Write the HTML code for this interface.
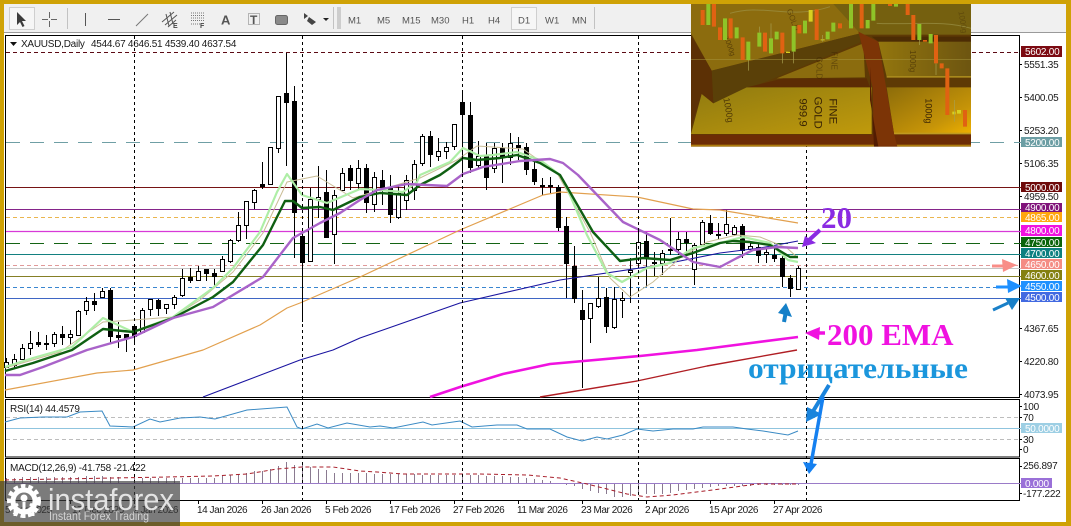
<!DOCTYPE html>
<html><head><meta charset="utf-8"><title>XAUUSD Daily</title>
<style>html,body{margin:0;padding:0;background:#fff}svg{display:block;font-family:"Liberation Sans",sans-serif;font-size:10px;letter-spacing:-.25px}text{fill:#1a1a1a}.d text{letter-spacing:-.45px}.z{letter-spacing:0}</style></head>
<body>
<svg xmlns="http://www.w3.org/2000/svg" width="1071" height="526" viewBox="0 0 1071 526">
<defs>
<linearGradient id="g1" x1="0" y1="0" x2="1" y2="1"><stop offset="0" stop-color="#8f7a10"/><stop offset="1" stop-color="#c09a0c"/></linearGradient>
<linearGradient id="g2" x1="0" y1="0" x2="1" y2="1"><stop offset="0" stop-color="#8c6c0a"/><stop offset=".7" stop-color="#c69408"/><stop offset="1" stop-color="#eeb000"/></linearGradient>
<linearGradient id="g3" x1="0" y1="0" x2="1" y2="0"><stop offset="0" stop-color="#93760e"/><stop offset="1" stop-color="#6d5510"/></linearGradient>
<clipPath id="c"><rect x="3" y="12" width="840" height="428"/></clipPath>
</defs>
<rect width="1071" height="526" fill="#cfa205"/>
<rect x="4" y="4" width="1062" height="518" fill="#fff"/>
<!-- toolbar -->
<rect x="4" y="4" width="1062" height="28" fill="#f0f0f0"/>
<rect x="4" y="32" width="1062" height="1" fill="#9a9a9a"/>
<rect x="9.5" y="7.5" width="25" height="22" fill="#f6f6f6" stroke="#cfcfcf"/>
<path d="M17 12l0 13 3-3 2.5 5 2-1-2.5-5 4 0z" fill="#3c3c3c"/>
<path d="M42 19.5h6M51 19.5h6M49.5 12v6M49.5 21v6" stroke="#666" fill="none"/>
<path d="M67.5 8v21" stroke="#c2c2c2"/>
<path d="M85.5 13v13" stroke="#555"/>
<path d="M108 19.5h12" stroke="#555"/>
<path d="M136 26l12-12" stroke="#777"/>
<path d="M162 22l12-10M165 25l12-10M168 27l8-7M166 14l3 12M170 12l3 12" stroke="#555" fill="none"/>
<text class="z" x="173" y="28" style="font-size:7px;font-weight:bold;fill:#444">E</text>
<path d="M191 13h13M191 15.5h13M191 18h13M191 20.5h13M191 24h9" stroke="#777" stroke-dasharray="1 1"/>
<text class="z" x="200" y="28" style="font-size:7px;font-weight:bold;fill:#444">F</text>
<text class="z" x="221" y="24.5" style="font-size:13px;font-weight:bold;fill:#555">A</text>
<rect x="248.5" y="13.5" width="11" height="11" fill="none" stroke="#777" stroke-dasharray="1 1"/>
<text class="z" x="250" y="24" style="font-size:12px;font-weight:bold;fill:#555">T</text>
<rect x="275.5" y="15.5" width="12" height="9" rx="2" fill="#8a8a8a" stroke="#666"/>
<path d="M304 13l4 3-4 3zM309 17l7 5-4 3-5-4z" fill="#444"/>
<path d="M323 18h6l-3 3z" fill="#222"/>
<path d="M333.5 7v22" stroke="#c2c2c2"/>
<path d="M337 8h4M337 10h4M337 12h4M337 14h4M337 16h4M337 18h4M337 20h4M337 22h4M337 24h4M337 26h4M337 28h4" stroke="#aaa"/>
<g class="z">
<text x="348" y="23.5" style="font-size:9.5px;fill:#555">M1</text>
<text x="377" y="23.5" style="font-size:9.5px;fill:#555">M5</text>
<text x="402" y="23.5" style="font-size:9.5px;fill:#555">M15</text>
<text x="431" y="23.5" style="font-size:9.5px;fill:#555">M30</text>
<text x="462" y="23.5" style="font-size:9.5px;fill:#555">H1</text>
<text x="488" y="23.5" style="font-size:9.5px;fill:#555">H4</text>
<rect x="511.5" y="7.5" width="25" height="22" fill="#f6f6f6" stroke="#cfcfcf"/>
<text x="518" y="23.5" style="font-size:9.5px;fill:#555">D1</text>
<text x="545" y="23.5" style="font-size:9.5px;fill:#555">W1</text>
<text x="572" y="23.5" style="font-size:9.5px;fill:#555">MN</text>
</g>
<path d="M594.5 7v22" stroke="#c2c2c2"/>

<!-- panes -->
<path d="M5 35.5H1019.5V397.5H5.5V35M5.5 399.5H1019.5V457H5.5zM5.5 458.5H1019.5V500.5H5.5z" fill="none" stroke="#000"/>

<!-- horizontal levels -->
<g fill="none">
<path d="M6 52.5H1021" stroke="#5c0a14" stroke-dasharray="4 3"/>
<path d="M6 142.5H1021" stroke="#6f9fa5" stroke-dasharray="14 10"/>
<path d="M6 187.5H1021" stroke="#761414"/>
<path d="M6 209.5H1021" stroke="#85248a"/>
<path d="M6 217.5H1021" stroke="#eab54e" stroke-dasharray="4 3"/>
<path d="M6 231.5H1021" stroke="#d83ad8" stroke-width="1.3"/>
<path d="M6 243.5H1021" stroke="#146414" stroke-dasharray="14 10"/>
<path d="M6 254.5H1021" stroke="#138080"/>
<path d="M6 265.5H1021" stroke="#e09a9a" stroke-dasharray="4 3"/>
<path d="M6 268.5H1021" stroke="#c4c4c4"/>
<path d="M6 276.5H1021" stroke="#857f25"/>
<path d="M6 287.5H1021" stroke="#3a86d0" stroke-dasharray="4 3"/>
<path d="M6 298.5H1021" stroke="#3f66c4"/>
</g>

<!-- candle wicks -->
<path stroke="#000" fill="none" d="M6.5 358V368M14.5 354V368M22.5 344V360M30.5 331V355M38.5 332V347M46.5 335V350M54.5 332V347M62.5 326V345M70.5 330V345M78.5 310V336M86.5 297V315M94.5 293V311M102.5 288V298M110.5 288V343M118.5 322V348M126.5 334V352M134.5 324V345M142.5 308V333M150.5 299V316M158.5 299V316M166.5 304V314M174.5 295V309M182.5 269V297M190.5 268V283M198.5 266V280M206.5 269V281M214.5 269V287M222.5 256V272M230.5 239V263M238.5 212V242M246.5 201V239M254.5 189V209M262.5 162V189M270.5 147V184M278.5 96V153M286.5 53V166M294.5 86V258M302.5 233V322M310.5 188V261M318.5 166V218M326.5 170V238M334.5 190V264M342.5 168V190M350.5 165V190M358.5 160V190M366.5 164V213M374.5 172V212M382.5 170V205M390.5 175V223M398.5 185V219M406.5 175V210M414.5 160V200M422.5 134V166M430.5 131V167M438.5 138V161M446.5 142V159M454.5 124V150M462.5 93V175M470.5 102V173M478.5 141V169M486.5 143V190M494.5 143V173M502.5 143V183M510.5 133V165M518.5 137V160M526.5 143V175M534.5 158V185M542.5 178V195M550.5 177V194M558.5 185V231M566.5 217V298M574.5 246V303M582.5 290V388M590.5 303V343M598.5 277V308M606.5 288V333M614.5 287V329M622.5 292V318M630.5 258V303M638.5 230V268M646.5 232V287M654.5 252V276M662.5 250V275M670.5 218V255M678.5 232V255M686.5 232V255M694.5 243V285M702.5 220V245M710.5 215V235M718.5 223V239M726.5 210V236M734.5 225V236M742.5 224V258M750.5 243V251M758.5 243V263M766.5 247V263M774.5 248V262M782.5 256V287M790.5 275V297M798.5 266V290"/>
<!-- white bodies -->
<path fill="#fff" stroke="#000" d="M4.5 362.5h4v5h-4zM12.5 359.5h4v6h-4zM20.5 348.5h4v11h-4zM28.5 343.5h4v5h-4zM44.5 343.5h4v1h-4zM52.5 334.5h4v9h-4zM68.5 334.5h4v3h-4zM76.5 311.5h4v24h-4zM84.5 301.5h4v9h-4zM100.5 291.5h4v6h-4zM140.5 310.5h4v22h-4zM148.5 299.5h4v10h-4zM164.5 304.5h4v4h-4zM172.5 297.5h4v7h-4zM180.5 278.5h4v17h-4zM196.5 271.5h4v9h-4zM220.5 259.5h4v12h-4zM228.5 240.5h4v21h-4zM236.5 225.5h4v15h-4zM244.5 201.5h4v24h-4zM252.5 190.5h4v12h-4zM268.5 147.5h4v37h-4zM276.5 96.5h4v52h-4zM308.5 199.5h4v62h-4zM316.5 197.5h4v2h-4zM332.5 195.5h4v39h-4zM340.5 173.5h4v17h-4zM356.5 168.5h4v15h-4zM372.5 177.5h4v27h-4zM396.5 193.5h4v24h-4zM404.5 180.5h4v20h-4zM412.5 164.5h4v26h-4zM420.5 136.5h4v27h-4zM436.5 151.5h4v5h-4zM444.5 147.5h4v4h-4zM452.5 124.5h4v22h-4zM476.5 156.5h4v9h-4zM492.5 148.5h4v20h-4zM508.5 143.5h4v14h-4zM588.5 303.5h4v15h-4zM596.5 298.5h4v8h-4zM612.5 299.5h4v28h-4zM620.5 298.5h4v2h-4zM628.5 270.5h4v2h-4zM636.5 242.5h4v21h-4zM660.5 253.5h4v10h-4zM676.5 239.5h4v10h-4zM692.5 245.5h4v24h-4zM700.5 222.5h4v22h-4zM724.5 224.5h4v9h-4zM732.5 227.5h4v7h-4zM748.5 246.5h4v3h-4zM764.5 252.5h4v2h-4zM796.5 268.5h4v21h-4z"/>
<!-- black bodies -->
<path fill="#000" d="M36 342h5v3h-5zM60 334h5v4h-5zM92 301h5v4h-5zM108 290h5v47h-5zM116 335h5v3h-5zM124 334h5v5h-5zM132 326h5v11h-5zM156 300h5v9h-5zM188 277h5v4h-5zM204 269h5v5h-5zM212 273h5v4h-5zM260 184h5v3h-5zM284 93h5v10h-5zM292 101h5v112h-5zM300 236h5v27h-5zM324 192h5v46h-5zM348 168h5v13h-5zM364 168h5v35h-5zM380 180h5v8h-5zM388 188h5v27h-5zM428 136h5v19h-5zM460 102h5v13h-5zM468 115h5v53h-5zM484 156h5v22h-5zM500 148h5v10h-5zM516 145h5v3h-5zM524 147h5v23h-5zM532 169h5v13h-5zM540 185h5v2h-5zM548 185h5v2h-5zM556 187h5v41h-5zM564 226h5v38h-5zM572 266h5v33h-5zM580 310h5v10h-5zM604 297h5v30h-5zM644 241h5v17h-5zM652 262h5v2h-5zM668 249h5v2h-5zM684 239h5v4h-5zM708 223h5v11h-5zM716 234h5v2h-5zM740 226h5v25h-5zM756 247h5v9h-5zM772 255h5v4h-5zM780 258h5v19h-5zM788 278h5v11h-5z"/>

<!-- moving averages -->
<g fill="none" stroke-linejoin="round">
<polyline stroke="#1a14a0" stroke-width="1.1" points="203,397 300,360 333,350 360,338 460,303 560,280 660,265 720,253 760,248 798,241"/>
<polyline stroke="#e2a04e" stroke-width="1.2" points="5,390 97,373 133,370 203,350 260,325 287,308 300,303 360,277 460,230 543,195 560,192 637,197 693,209 720,210 798,223"/>
<polyline stroke="#c9bd95" stroke-width="1" points="5,368 60,352 103,322 133,320 173,317 200,300 233,272 263,233 287,182 297,180 317,176 353,198 420,178 457,160 477,146 493,147 523,149 557,173 590,232 610,278 630,297 653,282 680,258 707,242 737,235 760,237 787,248 798,258"/>
<polyline stroke="#aeeea6" stroke-width="2.2" points="5,367 33,358 72,347 103,318 133,332 173,317 213,288 233,268 260,232 277,192 287,174 302,195 327,203 360,189 380,190 403,192 417,182 420,175 450,162 463,148 480,156 493,155 517,152 540,160 560,175 567,188 587,235 607,273 622,282 647,268 670,263 693,248 720,243 743,237 770,243 788,260 798,262"/>
<polyline stroke="#0f5f12" stroke-width="2.4" points="5,371 33,363 72,350 103,329 133,332 173,318 213,297 233,282 263,245 285,201 293,201 302,208 320,207 333,210 360,197 380,193 407,195 420,185 440,175 450,168 463,158 477,160 500,158 517,155 540,163 560,175 567,187 593,232 620,261 643,258 670,260 693,253 720,243 733,241 750,242 770,245 790,257 798,257"/>
<polyline stroke="#a963c9" stroke-width="2.4" points="5,375 20,375 43,367 87,350 133,337 173,318 213,307 263,277 293,238 320,223 340,213 360,200 377,190 407,184 447,186 463,174 483,167 520,161 550,159 563,163 578,175 623,222 660,240 693,262 720,267 737,258 753,250 777,247 798,248"/>
<polyline stroke="#f012e0" stroke-width="2.6" points="430,397 460,387 503,374 550,364 640,356 697,350 720,347 798,337"/>
<polyline stroke="#b01e24" stroke-width="1.4" points="540,397 637,381 707,366 797,350"/>
</g>

<!-- RSI -->
<path d="M6 417.5H1019M6 439.5H1019" stroke="#bdbdbd" stroke-dasharray="4 3"/>
<path d="M6 428.5H1021" stroke="#8fc4de"/>
<polyline fill="none" stroke="#3a8ac4" points="5,422 20,418 43,417 67,417 80,412 102,411 110,426 133,427 150,419 160,422 180,418 200,417 215,419 247,410 287,407 297,427 302,429 317,424 328,428 347,423 370,427 380,426 393,428 423,422 432,425 460,421 472,427 497,425 517,425 527,429 550,429 567,437 582,441 597,437 607,439 623,435 637,429 653,431 673,429 693,429 703,427 720,427 733,427 747,429 763,431 788,435 798,431"/>
<text x="10" y="412">RSI(14) 44.4579</text>

<!-- MACD -->
<path d="M6 483.5H1021" stroke="#9a7bc8"/>
<path stroke="#8a7a90" fill="none" d="M6.5 483V478M14.5 483V478M22.5 483V477M30.5 483V477M38.5 483V477M46.5 483V477M54.5 483V477M62.5 483V477M70.5 483V477M78.5 483V477M86.5 483V476M94.5 483V476M102.5 483V476M110.5 483V477M118.5 483V477M134.5 483V478M142.5 483V478M150.5 483V478M158.5 483V478M166.5 483V478M174.5 483V478M182.5 483V478M190.5 483V478M198.5 483V478M206.5 483V478M214.5 483V478M222.5 483V476M230.5 483V475M238.5 483V474M246.5 483V473M254.5 483V471M262.5 483V471M270.5 483V469M278.5 483V466M286.5 483V462M294.5 483V465M302.5 483V465M310.5 483V467M318.5 483V469M326.5 483V470M334.5 483V473M342.5 483V473M350.5 483V473M358.5 483V473M366.5 483V473M374.5 483V474M382.5 483V474M390.5 483V474M398.5 483V474M406.5 483V474M414.5 483V474M422.5 483V475M430.5 483V475M438.5 483V475M446.5 483V475M454.5 483V475M462.5 483V474M470.5 483V475M478.5 483V475M486.5 483V476M494.5 483V476M502.5 483V476M510.5 483V477M518.5 483V477M526.5 483V478M534.5 483V479M542.5 483V480M550.5 483V481M566.5 484V485M574.5 484V486M582.5 484V489M590.5 484V491M598.5 484V493M606.5 484V494M614.5 484V497M622.5 484V497M630.5 484V496M638.5 484V495M646.5 484V494M654.5 484V494M662.5 484V494M670.5 484V493M678.5 484V491M686.5 484V490M694.5 484V489M702.5 484V488M710.5 484V487M718.5 484V486M726.5 484V486M734.5 484V486M742.5 484V486M750.5 484V486M758.5 484V485M766.5 484V485M774.5 484V485M782.5 484V485M790.5 484V485M798.5 484V485"/>
<polyline fill="none" stroke="#a81e2a" stroke-dasharray="4 3" points="5,480 167,477 213,476 247,474 277,469 302,467 333,467 360,471 377,472 403,474 480,474 527,475 560,478 587,484 627,494 647,497 673,495 720,489 757,484 798,484"/>
<text x="10" y="471">MACD(12,26,9) -41.758 -21.422</text>

<!-- vertical dashed -->
<path d="M134.5 36V500M302.5 36V500M462.5 36V500M638.5 36V500M806.5 36V500" stroke="#000" stroke-dasharray="3 3" fill="none"/>

<!-- header -->
<path d="M10 42h7l-3.5 4z" fill="#111"/>
<text x="21" y="47">XAUUSD,Daily</text>
<text x="91" y="47">4544.67 4646.51 4539.40 4637.54</text>

<!-- x axis -->
<path d="M198.5 500v4M262.5 500v4M326.5 500v4M390.5 500v4M454.5 500v4M518.5 500v4M582.5 500v4M646.5 500v4M710.5 500v4M774.5 500v4M70.5 500v4M134.5 500v4" stroke="#000"/>
<g class="d">
<text x="5" y="513">5 Dec 2025</text><text x="72" y="513">17 Dec 2025</text><text x="133" y="513">2 Jan 2026</text>
<text x="197" y="513">14 Jan 2026</text><text x="261" y="513">26 Jan 2026</text><text x="325" y="513">5 Feb 2026</text>
<text x="389" y="513">17 Feb 2026</text><text x="453" y="513">27 Feb 2026</text><text x="517" y="513">11 Mar 2026</text>
<text x="581" y="513">23 Mar 2026</text><text x="645" y="513">2 Apr 2026</text><text x="709" y="513">15 Apr 2026</text><text x="773" y="513">27 Apr 2026</text>
</g>

<!-- price axis -->
<path d="M1019 64.5h3M1019 97.5h3M1019 130.5h3M1019 163.5h3M1019 196.5h3M1019 328.5h3M1019 361.5h3M1019 394.5h3M1019 406.5h3M1019 417.5h3M1019 439.5h3M1019 449.5h3M1019 466.5h3M1019 493.5h3" stroke="#000"/>
<text x="1024" y="68">5551.35</text><text x="1024" y="101">5400.05</text><text x="1024" y="134">5253.20</text><text x="1024" y="167">5106.35</text><text x="1024" y="200">4959.50</text><text x="1024" y="332">4367.65</text><text x="1024" y="365">4220.80</text><text x="1024" y="398">4073.95</text>
<text x="1023" y="410">100</text><text x="1023" y="421">70</text><text x="1023" y="443">30</text><text x="1023" y="453">0</text>
<text x="1023" y="469">256.897</text><text x="1023" y="497">-177.222</text>

<g>
<rect x="1021" y="46" width="41" height="11" fill="#7c0a12"/>
<rect x="1021" y="137" width="41" height="10" fill="#6c9ea4"/>
<rect x="1021" y="182" width="41" height="10" fill="#6e0a0a"/>
<rect x="1021" y="203" width="41" height="9" fill="#80127a"/>
<rect x="1021" y="212" width="41" height="10" fill="#ffa60e"/>
<rect x="1021" y="225" width="41" height="11" fill="#f012e0"/>
<rect x="1021" y="237" width="41" height="10" fill="#0a640a"/>
<rect x="1021" y="248" width="41" height="10" fill="#0d8080"/>
<rect x="1021" y="259" width="41" height="10" fill="#f48c84"/>
<rect x="1021" y="270" width="41" height="10" fill="#848010"/>
<rect x="1021" y="281" width="41" height="10" fill="#1e90ff"/>
<rect x="1021" y="292" width="41" height="10" fill="#4169e1"/>
<rect x="1021" y="423" width="41" height="10" fill="#9dcfe4"/>
<rect x="1021" y="478" width="31" height="10" fill="#9a70d8"/>
</g>
<g>
<text x="1025" y="55" style="fill:#fff">5602.00</text><text x="1025" y="146" style="fill:#fff">5200.00</text><text x="1025" y="191" style="fill:#fff">5000.00</text><text x="1025" y="211" style="fill:#fff">4900.00</text><text x="1025" y="221" style="fill:#fff">4865.00</text><text x="1025" y="234" style="fill:#fff">4800.00</text><text x="1025" y="246" style="fill:#fff">4750.00</text><text x="1025" y="257" style="fill:#fff">4700.00</text><text x="1025" y="268" style="fill:#fff">4650.00</text><text x="1025" y="279" style="fill:#fff">4600.00</text><text x="1025" y="290" style="fill:#fff">4550.00</text><text x="1025" y="301" style="fill:#fff">4500.00</text><text x="1025" y="432" style="fill:#fff">50.0000</text><text x="1025" y="487" style="fill:#fff">0.000</text>
</g>

<!-- gold image -->
<g class="z" transform="translate(690,0) scale(.33333)" clip-path="url(#c)">
<rect x="0" y="0" width="850" height="445" fill="#5e3a05"/>
<rect x="0" y="0" width="850" height="104" fill="#75600f"/>
<polygon points="3,100 65,212 510,100 430,12 3,12" fill="#8c6c0e"/>
<polygon points="65,212 70,310 510,128 510,100" fill="#5a4008"/>
<polygon points="0,100 65,212 70,310 35,282 0,390" fill="#5c3005"/>
<polygon points="260,235 520,130 525,232" fill="#8b6c0e"/>
<polygon points="170,262 280,235 530,235 540,262" fill="#5c2c04"/>
<polygon points="35,282 70,310 170,262 545,262 545,402 3,402" fill="url(#g1)"/>
<rect x="0" y="404" width="850" height="36" fill="#6c2c05"/>
<rect x="0" y="434" width="850" height="6" fill="#ad7c0c"/>
<polygon points="565,125 843,125 843,230 590,230" fill="url(#g3)"/>
<rect x="590" y="228" width="260" height="5" fill="#a8891c"/>
<polygon points="590,262 843,262 843,400 612,400" fill="url(#g2)"/>
<rect x="612" y="398" width="240" height="5" fill="#c09a20"/>
<polygon points="505,95 565,125 612,400 622,440 552,440 548,262" fill="#7c3406"/>
<polygon points="540,200 552,440 565,440 540,300" fill="#521c02"/>
<polygon points="545,110 845,110 845,125 565,125" fill="#4c2c04"/>
<path d="M3 178H843" stroke="#a89840" stroke-width="2" opacity=".8"/>
<path d="M120 40C220 10 300 60 420 20M560 70C680 75 760 60 843 85" stroke="#a09a50" stroke-width="3" fill="none" opacity=".6"/>
<g>
<text transform="translate(418,295) rotate(90)" style="font-size:34px;fill:#3a2404">FINE</text>
<text transform="translate(373,290) rotate(90)" style="font-size:34px;fill:#3a2404">GOLD</text>
<text transform="translate(328,295) rotate(90)" style="font-size:34px;fill:#3a2404">999,9</text>
<text transform="translate(707,295) rotate(90)" style="font-size:27px;fill:#3a2404">1000g</text>
<text transform="translate(100,295) rotate(80)" style="font-size:27px;fill:#3a2404;opacity:.8">1000g</text>
<text transform="translate(102,112) rotate(70)" style="font-size:22px;fill:#3a2404;opacity:.6">1000g</text>
<text transform="translate(290,30) rotate(70)" style="font-size:24px;fill:#3a2404;opacity:.5">GOLD</text>
<text transform="translate(660,150) rotate(90)" style="font-size:24px;fill:#3a2404;opacity:.6">1000g</text>
<text transform="translate(805,35) rotate(80)" style="font-size:24px;fill:#3a2404;opacity:.35">1000g</text>
<text transform="translate(425,155) rotate(90)" style="font-size:24px;fill:#3a2404;opacity:.5">FINE</text>
<text transform="translate(380,170) rotate(90)" style="font-size:24px;fill:#3a2404;opacity:.5">GOLD</text>
</g>
<path fill="#e06212" d="M32 30h12v45h-12zM66 12h12v68h-12zM84 82h12v38h-12zM116 55h12v60h-12zM152 112h12v68h-12zM219 98h12v57h-12zM271 98h12v62h-12zM322 75h12v25h-12zM374 28h12v92h-12zM444 70h12v15h-12zM509 12h12v73h-12zM594 12h12v6h-12zM647 12h12v33h-12zM664 45h12v75h-12zM699 120h12v5h-12zM732 105h12v85h-12zM749 190h12v15h-12zM766 205h12v140h-12zM819 330h12v50h-12z"/>
<path fill="#8fc428" d="M49 12h12v63h-12zM99 55h12v65h-12zM134 82h12v33h-12zM169 125h12v55h-12zM202 98h12v42h-12zM237 115h12v45h-12zM254 95h12v23h-12zM305 78h12v77h-12zM339 62h12v38h-12zM407 95h12v23h-12zM424 68h12v27h-12zM477 12h12v73h-12zM527 60h12v25h-12zM544 12h12v50h-12zM612 12h12v8h-12zM682 72h12v48h-12zM716 102h12v28h-12z"/>
<path fill="#d8d020" d="M356 30h12v35h-12zM787 335h10v8h-10zM801 330h12v11h-12zM288 155h12v4h-12zM392 118h12v3h-12z"/>
<path stroke="#a8a050" stroke-width="2" fill="none" d="M175 180v32M208 80v18M311 155v35M243 70v45M278 160v30M398 105v20M688 120v15M738 190v35M793 300v65"/>
</g>

<!-- annotations -->
<g class="z">
<text x="821" y="228" style="font-family:'Liberation Serif',serif;font-size:31px;font-weight:bold;fill:#8a2be2">20</text>
<text x="827" y="345" style="font-family:'Liberation Serif',serif;font-size:31px;font-weight:bold;fill:#f012e0">200 EMA</text>
<text x="748" y="378" textLength="220" lengthAdjust="spacingAndGlyphs" style="font-family:'Liberation Serif',serif;font-size:30px;font-weight:bold;fill:#1b96dc">отрицательные</text>
</g>
<path d="M820 230L808 241" stroke="#8a2be2" stroke-width="4"/>
<polygon points="802,247 805,236 816,243" fill="#8a2be2"/>
<path d="M825 333H815" stroke="#f012e0" stroke-width="3.5"/>
<polygon points="805,333 820,327 819,340" fill="#f012e0"/>
<path d="M829 385L812 413" stroke="#1a84dc" stroke-width="4"/>
<polygon points="806,422 807,407 822,414" fill="#1a84dc"/>
<path d="M823 397L811 464" stroke="#1580f0" stroke-width="3.5"/>
<polygon points="809,474 803,462 817,464" fill="#1580f0"/>
<path d="M784 322L786 311" stroke="#1580c8" stroke-width="4"/>
<polygon points="786,303 778,313 792,317" fill="#1580c8"/>
<path d="M992 266H1004" stroke="#f88e88" stroke-width="3"/>
<polygon points="1017,265 1002,259 1003,272" fill="#f88e88"/>
<path d="M996 287H1008" stroke="#1e90ff" stroke-width="3"/>
<polygon points="1022,286 1007,279 1008,293" fill="#1e90ff"/>
<path d="M993 310L1008 303" stroke="#1a80c8" stroke-width="3"/>
<polygon points="1020,298 1005,298 1012,310" fill="#1a80c8"/>

<!-- watermark -->
<rect x="0" y="481" width="180" height="45" fill="#3c3c3c" opacity=".68"/>
<g fill="none" stroke="#fff">
<circle cx="24" cy="501" r="11" stroke-width="5"/>
<circle cx="24" cy="501" r="15" stroke-width="4" stroke-dasharray="4.5 3"/>
</g>
<circle cx="24" cy="498" r="3.5" fill="#fff"/>
<path d="M15 516v-10l3-2M24 518v-16M33 516v-10l-3-2" stroke="#fff" stroke-width="3" fill="none"/>
<g class="z">
<text x="48" y="510" textLength="126" lengthAdjust="spacingAndGlyphs" style="font-size:31px;fill:#e4e4e4">instaforex</text>
<text x="49" y="520" textLength="100" lengthAdjust="spacingAndGlyphs" style="font-size:12px;fill:#d4d4d4">Instant Forex Trading</text>
</g>
</svg>
</body></html>
